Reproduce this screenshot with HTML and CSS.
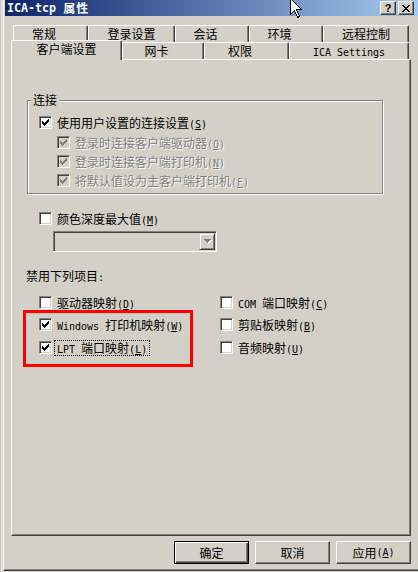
FILE: index.html
```html
<!DOCTYPE html>
<html lang="zh-CN">
<head>
<meta charset="utf-8">
<title>ICA-tcp 属性</title>
<link rel="stylesheet" href="styles.css">
</head>
<body>
<div class="screen">
  <div class="behind"></div>
  <div class="dialog">
    <div class="titlebar">
      <span class="title"><span class="tm">ICA-tcp </span><span class="tc">属性</span></span>
      <div class="caps">
        <span class="capbtn">?</span>
        <span class="capbtn">
          <svg class="xglyph" width="8" height="7" viewBox="0 0 8 7"><path d="M0 0h2v1H0zM6 0h2v1H6zM1 1h2v1H1zM5 1h2v1H5zM2 2h4v1H2zM3 3h2v1H3zM2 4h4v1H2zM1 5h2v1H1zM5 5h2v1H5zM0 6h2v1H0zM6 6h2v1H6z"/></svg>
        </span>
      </div>
    </div>
    <div class="content">
      <div class="tabs">
        <div class="tabrow">
          <div class="tab short w-general">常规</div>
          <div class="tab w-login">登录设置</div>
          <div class="tab short w-session">会话</div>
          <div class="tab short w-env">环境</div>
          <div class="tab w-remote">远程控制</div>
        </div>
        <div class="tabrow">
          <div class="tab active w-client">客户端设置</div>
          <div class="tab short w-nic">网卡</div>
          <div class="tab short w-perm">权限</div>
          <div class="tab w-ica"><span class="m">ICA Settings</span></div>
        </div>
      </div>
      <div class="panel">
        <div class="group">
          <div class="group-title">连接</div>
          <div class="cbrow r1">
            <span class="cb"><svg class="chk" width="7" height="7" viewBox="0 0 7 7"><path d="M6 0h1v1H6zM5 1h2v1H5zM0 2h1v1H0zM4 2h3v1H4zM0 3h2v1H0zM3 3h3v1H3zM0 4h5v1H0zM1 5h3v1H1zM2 6h1v1H2z"/></svg></span>
            <span>使用用户设置的连接设置<span class="m">(<u>S</u>)</span></span>
          </div>
          <div class="cbrow sub s1">
            <span class="cb dis-cb"><svg class="chk" width="7" height="7" viewBox="0 0 7 7"><path d="M6 0h1v1H6zM5 1h2v1H5zM0 2h1v1H0zM4 2h3v1H4zM0 3h2v1H0zM3 3h3v1H3zM0 4h5v1H0zM1 5h3v1H1zM2 6h1v1H2z"/></svg></span>
            <span class="dis">登录时连接客户端驱动器<span class="m">(<u>O</u>)</span></span>
          </div>
          <div class="cbrow sub">
            <span class="cb dis-cb"><svg class="chk" width="7" height="7" viewBox="0 0 7 7"><path d="M6 0h1v1H6zM5 1h2v1H5zM0 2h1v1H0zM4 2h3v1H4zM0 3h2v1H0zM3 3h3v1H3zM0 4h5v1H0zM1 5h3v1H1zM2 6h1v1H2z"/></svg></span>
            <span class="dis">登录时连接客户端打印机<span class="m">(<u>N</u>)</span></span>
          </div>
          <div class="cbrow sub">
            <span class="cb dis-cb"><svg class="chk" width="7" height="7" viewBox="0 0 7 7"><path d="M6 0h1v1H6zM5 1h2v1H5zM0 2h1v1H0zM4 2h3v1H4zM0 3h2v1H0zM3 3h3v1H3zM0 4h5v1H0zM1 5h3v1H1zM2 6h1v1H2z"/></svg></span>
            <span class="dis">将默认值设为主客户端打印机<span class="m">(<u>F</u>)</span></span>
          </div>
        </div>

        <div class="cbrow depth">
          <span class="cb"></span>
          <span>颜色深度最大值<span class="m">(<u>M</u>)</span></span>
        </div>
        <div class="combo">
          <span class="combo-btn">
            <svg width="8" height="5" viewBox="0 0 8 5"><path fill="#fff" d="M1 1h7v1H1zM2 2h5v1H2zM3 3h3v1H3zM4 4h1v1H4z"/><path fill="#808080" d="M0 0h7v1H0zM1 1h5v1H1zM2 2h3v1H2zM3 3h1v1H3z"/></svg>
          </span>
        </div>

        <div class="section-label">禁用下列项目<span class="m">:</span></div>
        <div class="opts">
          <div class="cbrow">
            <span class="cb"></span>
            <span>驱动器映射<span class="m">(<u>D</u>)</span></span>
          </div>
          <div class="cbrow">
            <span class="cb"></span>
            <span><span class="m">COM </span>端口映射<span class="m">(<u>C</u>)</span></span>
          </div>
          <div class="cbrow">
            <span class="cb"><svg class="chk" width="7" height="7" viewBox="0 0 7 7"><path d="M6 0h1v1H6zM5 1h2v1H5zM0 2h1v1H0zM4 2h3v1H4zM0 3h2v1H0zM3 3h3v1H3zM0 4h5v1H0zM1 5h3v1H1zM2 6h1v1H2z"/></svg></span>
            <span><span class="m">Windows </span>打印机映射<span class="m">(<u>W</u>)</span></span>
          </div>
          <div class="cbrow">
            <span class="cb"></span>
            <span>剪贴板映射<span class="m">(<u>B</u>)</span></span>
          </div>
          <div class="cbrow">
            <span class="cb"><svg class="chk" width="7" height="7" viewBox="0 0 7 7"><path d="M6 0h1v1H6zM5 1h2v1H5zM0 2h1v1H0zM4 2h3v1H4zM0 3h2v1H0zM3 3h3v1H3zM0 4h5v1H0zM1 5h3v1H1zM2 6h1v1H2z"/></svg></span>
            <span class="focus"><span class="m">LPT </span>端口映射<span class="m">(<u>L</u>)</span></span>
          </div>
          <div class="cbrow">
            <span class="cb"></span>
            <span>音频映射<span class="m">(<u>U</u>)</span></span>
          </div>
        </div>
      </div>

      <div class="buttons">
        <div class="btn default">确定</div>
        <div class="btn">取消</div>
        <div class="btn">应用<span class="m">(<u>A</u>)</span></div>
      </div>
    </div>
  </div>

  <div class="highlight"></div>
  <svg class="cursor" width="13" height="21" viewBox="0 0 13 21"><path d="M0.5 0.5V16.5L4.5 12.5L7.5 19.5L9.5 18.5L6.5 11.5H11.5Z" fill="#fff" stroke="#000" stroke-width="1"/></svg>
</div>
</body>
</html>
```

FILE: styles.css
```css
* { box-sizing: border-box; }
html, body { margin: 0; padding: 0; }
body {
  width: 418px;
  height: 572px;
  overflow: hidden;
  background: #D4D0C8;
  font-family: "Noto Sans CJK SC", "Noto Sans", sans-serif;
  font-size: 12px;
  line-height: 12px;
  color: #000;
}
.m {
  font-family: "DejaVu Sans Mono", "Liberation Mono", monospace;
  font-size: 10px;
  line-height: 8px;
  white-space: pre;
}
u { text-decoration: underline; text-underline-offset: 1px; }

.screen {
  position: relative;
  display: flex;
  align-items: flex-start;
  width: 418px;
  height: 572px;
}
.behind {
  width: 3px;
  height: 572px;
  flex: none;
  background: linear-gradient(to right, #c8c4bc 0 1px, #ecebe8 1px 2px, #D4D0C8 2px);
}
.dialog {
  flex: 1;
  height: 571px;
  display: flex;
  flex-direction: column;
  background: #D4D0C8;
  border-left: 1px solid #fff;
  border-bottom: 1px solid #404040;
  box-shadow: inset 0 -1px #808080;
}

/* title bar */
.titlebar {
  height: 16px;
  margin-left: 1px;
  padding-left: 2px;
  display: flex;
  align-items: center;
  background: linear-gradient(to right, #0A246A, #A6CAF0);
  color: #fff;
  font-weight: bold;
}
.title { white-space: pre; display: flex; align-items: center; }
.tm {
  font-family: "DejaVu Sans Mono", monospace;
  font-size: 11.67px;
  white-space: pre;
}
.tc { letter-spacing: 1px; }
.caps {
  margin-left: auto;
  margin-right: 4px;
  display: flex;
  gap: 2px;
}
.capbtn {
  width: 16px;
  height: 14px;
  border: 1px solid;
  border-color: #fff #404040 #404040 #fff;
  box-shadow: inset -1px -1px #808080;
  background: #D4D0C8;
  color: #000;
  display: flex;
  align-items: center;
  justify-content: center;
  font: bold 11px/1 "Liberation Sans", sans-serif;
}
.xglyph { display: block; fill: #000; shape-rendering: crispEdges; }

/* content */
.content { padding: 0 7px; }

.tabs { margin-top: 9px; }
.tabrow {
  display: flex;
  align-items: flex-start;
  height: 17px;
  padding-left: 2px;
}
.tab {
  flex: none;
  height: 17px;
  border: 1px solid;
  border-bottom: 0;
  border-color: #fff #404040 #fff #fff;
  border-radius: 2px 2px 0 0;
  box-shadow: inset -1px 0 #808080;
  text-align: center;
  padding-top: 2px;
  white-space: nowrap;
}
.tab.short { padding-right: 13px; }
.tab.active {
  height: 20px;
  margin-top: -2px;
  margin-left: -2px;
  position: relative;
  z-index: 1;
  background: #D4D0C8;
}
.w-general { width: 75px; }
.w-login { width: 87px; }
.w-session { width: 74px; }
.w-env { width: 74px; }
.w-remote { width: 86px; }
.w-client { width: 111px; }
.w-nic { width: 82px; }
.w-perm { width: 85px; }
.w-ica { width: 120px; }

.panel {
  height: 477px;
  border: 1px solid;
  border-color: #fff #404040 #404040 #fff;
  box-shadow: inset -1px -1px #808080;
  display: flex;
  flex-direction: column;
  align-items: flex-start;
}

.group {
  margin: 40px 0 0 15px;
  width: 356px;
  border: 1px solid #808080;
  box-shadow: inset 1px 1px #fff, 1px 1px #fff;
  padding: 0 0 6px 11px;
}
.group-title {
  margin: -7px 0 0 -8px;
  padding: 0 2px;
  background: #D4D0C8;
  width: max-content;
}

.cbrow {
  display: flex;
  align-items: center;
  height: 13px;
  gap: 5px;
  white-space: nowrap;
}
.group .r1 { margin-top: 10px; }
.group .sub { margin-left: 18px; margin-top: 6px; }
.group .sub.s1 { margin-top: 7px; }

.cb {
  flex: none;
  width: 13px;
  height: 13px;
  border: 1px solid;
  border-color: #808080 #fff #fff #808080;
  box-shadow: inset 1px 1px #404040, inset -1px -1px #D4D0C8;
  background: #fff;
  padding: 2px;
}
.chk { display: block; fill: #000; shape-rendering: crispEdges; }
.cb.dis-cb { background: #D4D0C8; }
.cb.dis-cb .chk { fill: #808080; }
.dis { color: #808080; text-shadow: 1px 1px 0 #fff; }

.depth { margin: 18px 0 0 27px; }
.combo {
  margin: 6px 0 0 41px;
  width: 164px;
  height: 21px;
  border: 1px solid;
  border-color: #808080 #fff #fff #808080;
  box-shadow: inset 1px 1px #404040, inset -1px -1px #D4D0C8;
  padding: 1px;
  display: flex;
  justify-content: flex-end;
}
.combo-btn {
  width: 16px;
  height: 17px;
  border: 1px solid;
  border-color: #D4D0C8 #404040 #404040 #D4D0C8;
  box-shadow: inset 1px 1px #fff, inset -1px -1px #808080;
  display: flex;
  align-items: center;
  justify-content: center;
  padding-left: 1px;
}
.combo-btn svg { display: block; shape-rendering: crispEdges; }

.section-label { margin: 18px 0 0 14px; height: 12px; white-space: nowrap; }
.opts {
  margin: 14px 0 0 27px;
  display: grid;
  grid-template-columns: 181px auto;
  grid-template-rows: 22px 23px 13px;
}
.focus {
  border: 1px dotted #000;
  padding: 1px 2px;
  margin-left: -3px;
}

.buttons {
  margin-top: 5px;
  display: flex;
  justify-content: flex-end;
  gap: 6px;
}
.btn {
  width: 75px;
  height: 23px;
  border: 1px solid;
  border-color: #fff #404040 #404040 #fff;
  box-shadow: inset -1px -1px #808080;
  display: flex;
  align-items: center;
  justify-content: center;
  white-space: nowrap;
}
.btn.default {
  border-color: #000;
  box-shadow: inset 1px 1px #fff, inset -1px -1px #404040, inset -2px -2px #808080;
}

/* overlays */
.highlight {
  position: absolute;
  left: 23px;
  top: 310px;
  width: 170px;
  height: 57px;
  border: 3px solid #f00;
}
.cursor {
  position: absolute;
  left: 290px;
  top: -2px;
  shape-rendering: crispEdges;
}
```
